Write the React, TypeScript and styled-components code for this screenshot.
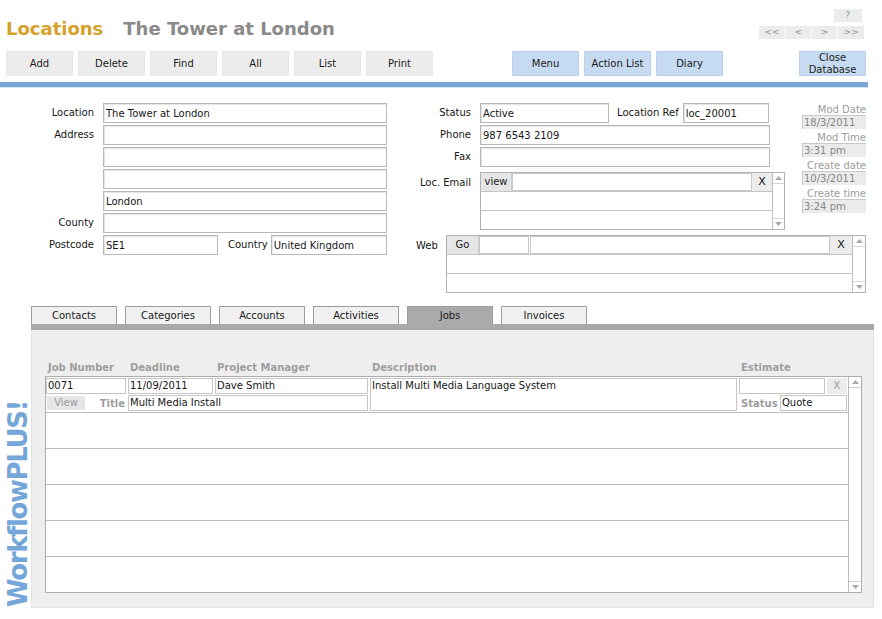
import React from "react";
import styled, { createGlobalStyle } from "styled-components";

const GlobalStyle = createGlobalStyle`
  html, body { margin: 0; padding: 0; background: #fff; }
  body {
    font-family: "DejaVu Sans", Verdana, sans-serif;
    font-size: 10px;
    color: #161616;
  }
  * { box-sizing: border-box; }
`;

const Page = styled.div`
  width: 882px;
  height: 619px;
  overflow: hidden;
`;

/* ---------- header ---------- */

const Header = styled.header`
  display: flex;
  justify-content: space-between;
  height: 51px;
`;

const Title = styled.h1`
  display: flex;
  margin: 0;
  padding: 18px 0 0 6px;
  font-size: 18px;
  line-height: 21px;
  font-weight: bold;
  white-space: nowrap;
`;

const ModuleName = styled.span`
  color: #d4a12b;
  margin-right: 20px;
`;

const RecordName = styled.span`
  color: #8a8a8a;
`;

const Nav = styled.div`
  display: flex;
  flex-direction: column;
  align-items: flex-end;
  gap: 4px;
  padding: 9px 18px 0 0;
`;

const NavRow = styled.div`
  display: flex;
  gap: 1px;
`;

const NavButton = styled.div<{ $w: number; $inset?: number }>`
  width: ${(p) => p.$w}px;
  height: 13px;
  margin-right: ${(p) => p.$inset ?? 0}px;
  background: #ececec;
  color: #8c8c8c;
  font-size: 9px;
  line-height: 13px;
  text-align: center;
`;

/* ---------- toolbar ---------- */

const Toolbar = styled.nav`
  display: flex;
  gap: 5px;
  height: 25px;
  padding-left: 6px;
`;

const ToolButton = styled.div<{ $blue?: boolean; $push?: number }>`
  display: flex;
  align-items: center;
  justify-content: center;
  width: 67px;
  height: 25px;
  margin-left: ${(p) => p.$push ?? 0}px;
  background: ${(p) => (p.$blue ? "#c6daf1" : "#ececec")};
  border: 1px solid ${(p) => (p.$blue ? "#bcd2ec" : "#e8e8e8")};
  color: #1a1a1a;
  font-size: 10px;
  line-height: 12px;
  text-align: center;
`;

const Rule = styled.div`
  width: 868px;
  height: 6px;
  margin-top: 6px;
  background: #7aa7d7;
  border-bottom: 1px solid #d5e4f4;
`;

/* ---------- record form ---------- */

const FormArea = styled.section`
  display: flex;
  padding-top: 15px;
`;

const LeftForm = styled.div`
  display: grid;
  grid-template-columns: 94px 284px;
  grid-auto-rows: 20px;
  column-gap: 9px;
  row-gap: 2px;
  align-content: start;
`;

const Label = styled.div`
  align-self: center;
  text-align: right;
  white-space: nowrap;
  line-height: 12px;
`;

const InlineLabel = styled.div<{ $before?: number; $after?: number }>`
  align-self: center;
  margin: 0 ${(p) => p.$after ?? 3}px 0 ${(p) => p.$before ?? 0}px;
  white-space: nowrap;
  line-height: 12px;
`;

const Field = styled.div<{ $w?: number }>`
  ${(p) => (p.$w ? `width: ${p.$w}px; flex: none;` : "flex: 1;")}
  height: 20px;
  padding: 0 2px;
  background: #fff;
  border: 1px solid #b8b8b8;
  box-shadow: inset 1px 1px 0 #e6e6e6;
  line-height: 19px;
  white-space: nowrap;
  overflow: hidden;
`;

const FieldLine = styled.div`
  display: flex;
`;

const RightSide = styled.div`
  display: flex;
  flex-direction: column;
  gap: 5px;
  margin-left: 13px;
`;

const UpperRight = styled.div`
  display: flex;
  align-items: flex-start;
`;

const MidForm = styled.div`
  display: grid;
  grid-template-columns: 71px 305px;
  grid-template-rows: 20px 20px 20px 61px;
  column-gap: 9px;
  row-gap: 2px;
  width: 385px;
`;

const TopLabel = styled(Label)`
  align-self: start;
  padding-top: 8px;
`;

const BoxSlot = styled.div`
  padding-top: 3px;
`;

const StampColumn = styled.div`
  display: flex;
  flex-direction: column;
  gap: 2px;
  width: 64px;
  margin-left: 17px;
`;

const StampGroup = styled.div`
  display: flex;
  flex-direction: column;
`;

const StampLabel = styled.div`
  height: 12px;
  color: #9c9c9c;
  line-height: 14px;
  text-align: right;
  white-space: nowrap;
`;

const StampValue = styled.div`
  height: 14px;
  padding-left: 1px;
  background: #ebebeb;
  border-top: 1px solid #c9c9c9;
  border-left: 1px solid #c9c9c9;
  color: #858585;
  line-height: 13px;
  white-space: nowrap;
`;

const WebRow = styled.div`
  display: flex;
  align-items: flex-start;
`;

const WebLabel = styled.div`
  width: 30px;
  margin: 5px 0 0 16px;
  line-height: 12px;
`;

/* multi-line repeating fields (email, web) */

const MultiBox = styled.div<{ $w: number }>`
  display: flex;
  width: ${(p) => p.$w}px;
  height: 58px;
  background: #fff;
  border: 1px solid #b3b3b3;
`;

const MultiRows = styled.div`
  flex: 1;
  display: flex;
  flex-direction: column;
`;

const MultiRow = styled.div`
  flex: 1;
  display: flex;
  border-bottom: 1px solid #c4c4c4;
  &:last-child { border-bottom: none; }
`;

const RowButton = styled.div<{ $w: number }>`
  width: ${(p) => p.$w}px;
  flex: none;
  background: #e6e6e6;
  border-right: 1px solid #cdcdcd;
  color: #1a1a1a;
  line-height: 18px;
  text-align: center;
`;

const RowField = styled.div<{ $w?: number; $gapAfter?: number }>`
  ${(p) => (p.$w ? `width: ${p.$w}px; flex: none;` : "flex: 1;")}
  margin-right: ${(p) => p.$gapAfter ?? 0}px;
  border: 1px solid #c8c8c8;
  background: #fff;
`;

const ClearButton = styled.div<{ $w: number }>`
  width: ${(p) => p.$w}px;
  flex: none;
  background: #ececec;
  color: #111;
  font-size: 11px;
  line-height: 18px;
  text-align: center;
`;

const ScrollTrack = styled.div<{ $w: number }>`
  display: flex;
  flex-direction: column;
  justify-content: space-between;
  width: ${(p) => p.$w}px;
  flex: none;
  background: #fff;
  border-left: 1px solid #bdbdbd;
`;

const ScrollCap = styled.div<{ $end?: boolean }>`
  display: flex;
  align-items: center;
  justify-content: center;
  height: 11px;
  border-${(p) => (p.$end ? "top" : "bottom")}: 1px solid #d4d4d4;
`;

const Arrow = ({ dir }: { dir: "up" | "down" }) => (
  <svg width="7" height="4" viewBox="0 0 7 4">
    <path d={dir === "up" ? "M0 4 L3.5 0 L7 4Z" : "M0 0 L3.5 4 L7 0Z"} fill="#a8a8a8" />
  </svg>
);

const Scroller = ({ w }: { w: number }) => (
  <ScrollTrack $w={w}>
    <ScrollCap>
      <Arrow dir="up" />
    </ScrollCap>
    <ScrollCap $end>
      <Arrow dir="down" />
    </ScrollCap>
  </ScrollTrack>
);

/* ---------- lower: brand + tabs ---------- */

const Lower = styled.section`
  display: flex;
  margin-top: 13px;
`;

const Brand = styled.div`
  display: flex;
  align-items: flex-end;
  width: 31px;
  padding: 0 0 1px 5px;
`;

const BrandText = styled.span`
  writing-mode: vertical-rl;
  transform: rotate(180deg);
  color: #74a6da;
  font-size: 26px;
  font-weight: bold;
  line-height: 26px;
  letter-spacing: -1.4px;
  white-space: nowrap;
`;

const TabArea = styled.div`
  display: flex;
  flex-direction: column;
  width: 843px;
`;

const TabRow = styled.div`
  display: flex;
  gap: 8px;
  height: 18px;
`;

const Tab = styled.div<{ $active?: boolean }>`
  width: 86px;
  height: 18px;
  background: ${(p) => (p.$active ? "#aaaaaa" : "#f1f1f1")};
  border: 1px solid #9c9c9c;
  border-bottom: none;
  color: #1a1a1a;
  line-height: 18px;
  text-align: center;
`;

const TabStrip = styled.div`
  height: 6px;
  background: #a9a9a9;
`;

const Panel = styled.div`
  height: 278px;
  padding: 31px 11px 0 13px;
  background: #eeeeee;
  border: 1px solid #e2e2e2;
  border-top: none;
`;

const ColumnHeads = styled.div`
  display: grid;
  grid-template-columns: 80px 85px 153px 367px 108px;
  column-gap: 2px;
  height: 12px;
  margin-left: 1px;
`;

const Head = styled.div`
  padding-left: 2px;
  color: #9e9e9e;
  font-weight: bold;
  line-height: 14px;
  white-space: nowrap;
`;

const Portal = styled.div`
  display: flex;
  height: 217px;
  margin-top: 3px;
  background: #fff;
  border: 1px solid #adadad;
`;

const PortalRows = styled.div`
  flex: 1;
  display: flex;
  flex-direction: column;
`;

const PortalRow = styled.div`
  height: 36px;
  flex: none;
  border-bottom: 1px solid #bdbdbd;
  &:last-child { flex: 1; border-bottom: none; }
`;

const JobGrid = styled.div`
  display: grid;
  grid-template-columns: 80px 85px 153px 367px 108px;
  grid-template-rows: 16px 16px;
  column-gap: 2px;
  row-gap: 1px;
  padding-top: 1px;
`;

type Place = { $col?: string; $row?: string };

const JobField = styled.div<{ $w?: number } & Place>`
  ${(p) => (p.$w ? `width: ${p.$w}px; flex: none;` : "flex: 1;")}
  ${(p) => (p.$col ? `grid-column: ${p.$col};` : "")}
  ${(p) => (p.$row ? `grid-row: ${p.$row};` : "")}
  height: 100%;
  padding-left: 1px;
  background: #fff;
  border: 1px solid #c6c6c6;
  line-height: 14px;
  white-space: nowrap;
  overflow: hidden;
`;

const Cell = styled.div<Place>`
  display: flex;
  align-items: center;
  grid-column: ${(p) => p.$col ?? "auto"};
  grid-row: ${(p) => p.$row ?? "auto"};
`;

const ViewButton = styled.div`
  width: 38px;
  height: 14px;
  margin-left: 1px;
  background: #e6e6e6;
  color: #9a9a9a;
  line-height: 14px;
  text-align: center;
`;

const MutedLabel = styled.div<{ $w?: number }>`
  ${(p) => (p.$w ? `width: ${p.$w}px;` : "margin-left: auto;")}
  padding: 0 1px 0 2px;
  color: #9e9e9e;
  font-weight: bold;
  white-space: nowrap;
`;

const SoftClear = styled.div`
  width: 20px;
  height: 16px;
  margin-left: 2px;
  background: #ececec;
  color: #9a9a9a;
  line-height: 16px;
  text-align: center;
`;

const leftRows: { label?: string; value: string }[] = [
  { label: "Location", value: "The Tower at London" },
  { label: "Address", value: "" },
  { value: "" },
  { value: "" },
  { value: "London" },
  { label: "County", value: "" },
];

const stamps = [
  { label: "Mod Date", value: "18/3/2011" },
  { label: "Mod Time", value: "3:31 pm" },
  { label: "Create date", value: "10/3/2011" },
  { label: "Create time", value: "3:24 pm" },
];

const tabs = ["Contacts", "Categories", "Accounts", "Activities", "Jobs", "Invoices"];

export default function App() {
  return (
    <Page>
      <GlobalStyle />
      <Header>
        <Title>
          <ModuleName>Locations</ModuleName>
          <RecordName>The Tower at London</RecordName>
        </Title>
        <Nav>
          <NavButton $w={28} $inset={2}>?</NavButton>
          <NavRow>
            <NavButton $w={26}>&lt;&lt;</NavButton>
            <NavButton $w={25}>&lt;</NavButton>
            <NavButton $w={25}>&gt;</NavButton>
            <NavButton $w={26}>&gt;&gt;</NavButton>
          </NavRow>
        </Nav>
      </Header>

      <Toolbar>
        <ToolButton>Add</ToolButton>
        <ToolButton>Delete</ToolButton>
        <ToolButton>Find</ToolButton>
        <ToolButton>All</ToolButton>
        <ToolButton>List</ToolButton>
        <ToolButton>Print</ToolButton>
        <ToolButton $blue $push={74}>Menu</ToolButton>
        <ToolButton $blue>Action List</ToolButton>
        <ToolButton $blue>Diary</ToolButton>
        <ToolButton $blue $push={71}>
          Close
          <br />
          Database
        </ToolButton>
      </Toolbar>
      <Rule />

      <FormArea>
        <LeftForm>
          {leftRows.map((r, i) => (
            <React.Fragment key={i}>
              <Label>{r.label ?? ""}</Label>
              <Field>{r.value}</Field>
            </React.Fragment>
          ))}
          <Label>Postcode</Label>
          <FieldLine>
            <Field $w={115}>SE1</Field>
            <InlineLabel $before={10}>Country</InlineLabel>
            <Field>United Kingdom</Field>
          </FieldLine>
        </LeftForm>

        <RightSide>
          <UpperRight>
            <MidForm>
              <Label>Status</Label>
              <FieldLine>
                <Field $w={129}>Active</Field>
                <InlineLabel $before={8} $after={4}>Location Ref</InlineLabel>
                <Field $w={86}>loc_20001</Field>
              </FieldLine>
              <Label>Phone</Label>
              <FieldLine>
                <Field $w={290}>987 6543 2109</Field>
              </FieldLine>
              <Label>Fax</Label>
              <FieldLine>
                <Field $w={290} />
              </FieldLine>
              <TopLabel>Loc. Email</TopLabel>
              <BoxSlot>
                <MultiBox $w={305}>
                  <MultiRows>
                    <MultiRow>
                      <RowButton $w={31}>view</RowButton>
                      <RowField />
                      <ClearButton $w={20}>X</ClearButton>
                    </MultiRow>
                    <MultiRow />
                    <MultiRow />
                  </MultiRows>
                  <Scroller w={12} />
                </MultiBox>
              </BoxSlot>
            </MidForm>

            <StampColumn>
              {stamps.map((s) => (
                <StampGroup key={s.label}>
                  <StampLabel>{s.label}</StampLabel>
                  <StampValue>{s.value}</StampValue>
                </StampGroup>
              ))}
            </StampColumn>
          </UpperRight>

          <WebRow>
            <WebLabel>Web</WebLabel>
            <MultiBox $w={420}>
              <MultiRows>
                <MultiRow>
                  <RowButton $w={32}>Go</RowButton>
                  <RowField $w={50} $gapAfter={1} />
                  <RowField />
                  <ClearButton $w={22}>X</ClearButton>
                </MultiRow>
                <MultiRow />
                <MultiRow />
              </MultiRows>
              <Scroller w={13} />
            </MultiBox>
          </WebRow>
        </RightSide>
      </FormArea>

      <Lower>
        <Brand>
          <BrandText>WorkflowPLUS!</BrandText>
        </Brand>
        <TabArea>
          <TabRow>
            {tabs.map((t) => (
              <Tab key={t} $active={t === "Jobs"}>
                {t}
              </Tab>
            ))}
          </TabRow>
          <TabStrip />
          <Panel>
            <ColumnHeads>
              <Head>Job Number</Head>
              <Head>Deadline</Head>
              <Head>Project Manager</Head>
              <Head>Description</Head>
              <Head>Estimate</Head>
            </ColumnHeads>
            <Portal>
              <PortalRows>
                <PortalRow>
                  <JobGrid>
                    <JobField $col="1" $row="1">0071</JobField>
                    <JobField $col="2" $row="1">11/09/2011</JobField>
                    <JobField $col="3" $row="1">Dave Smith</JobField>
                    <JobField $col="4" $row="1 / span 2">
                      Install Multi Media Language System
                    </JobField>
                    <Cell $col="5" $row="1">
                      <JobField $w={86}>&nbsp;</JobField>
                      <SoftClear>X</SoftClear>
                    </Cell>
                    <Cell $col="1" $row="2">
                      <ViewButton>View</ViewButton>
                      <MutedLabel>Title</MutedLabel>
                    </Cell>
                    <JobField $col="2 / span 2" $row="2">
                      Multi Media Install
                    </JobField>
                    <Cell $col="5" $row="2">
                      <MutedLabel $w={41}>Status</MutedLabel>
                      <JobField>Quote</JobField>
                    </Cell>
                  </JobGrid>
                </PortalRow>
                <PortalRow />
                <PortalRow />
                <PortalRow />
                <PortalRow />
                <PortalRow />
              </PortalRows>
              <Scroller w={13} />
            </Portal>
          </Panel>
        </TabArea>
      </Lower>
    </Page>
  );
}
